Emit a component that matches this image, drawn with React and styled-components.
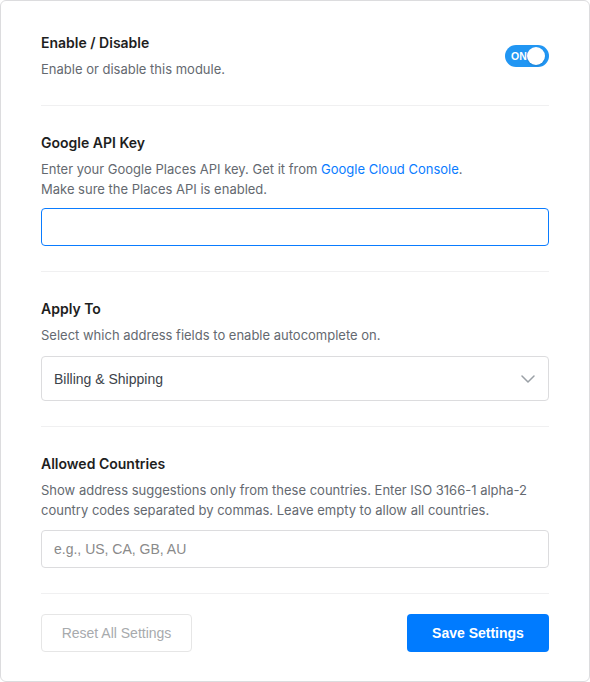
import React from "react";
import styled, { createGlobalStyle } from "styled-components";

const App = () => (
  <>
    <GlobalStyle />
    <Card>
      <Section>
        <Row>
          <div>
            <Title>Enable / Disable</Title>
            <Desc>Enable or disable this module.</Desc>
          </div>
          <Toggle type="button" aria-pressed="true">
            <ToggleLabel>ON</ToggleLabel>
            <Knob />
          </Toggle>
        </Row>
      </Section>

      <Section>
        <Title>Google API Key</Title>
        <Desc>
          Enter your Google Places API key. Get it from{" "}
          <Link href="#">Google Cloud Console</Link>.
          <br />
          Make sure the Places API is enabled.
        </Desc>
        <TextInput type="text" $focused $space={9} />
      </Section>

      <Section>
        <Title>Apply To</Title>
        <Desc>Select which address fields to enable autocomplete on.</Desc>
        <SelectBox>
          <span>Billing &amp; Shipping</span>
          <Chevron width="14" height="8" viewBox="0 0 14 8">
            <polyline points="1,1 7,7 13,1" />
          </Chevron>
        </SelectBox>
      </Section>

      <Section>
        <Title>Allowed Countries</Title>
        <Desc>
          Show address suggestions only from these countries. Enter ISO 3166-1
          alpha-2 country codes separated by commas. Leave empty to allow all
          countries.
        </Desc>
        <TextInput type="text" placeholder="e.g., US, CA, GB, AU" />
      </Section>

      <Footer>
        <GhostButton type="button">Reset All Settings</GhostButton>
        <PrimaryButton type="button">Save Settings</PrimaryButton>
      </Footer>
    </Card>
  </>
);

const GlobalStyle = createGlobalStyle`
  * { box-sizing: border-box; }
  html, body {
    margin: 0;
    background: #ffffff;
  }
  body {
    font-family: Inter, "Noto Sans", sans-serif;
  }
`;

const Card = styled.div`
  width: 590px;
  height: 682px;
  background: #fff;
  border: 1px solid #dcdcde;
  border-radius: 6px;
  padding: 5px 40px 29px;
`;

const Section = styled.section`
  padding: 27px 0 25px;
  border-bottom: 1px solid #f0f0f1;

  &:first-child {
    padding-bottom: 26px;
  }
`;

const Row = styled.div`
  display: flex;
  justify-content: space-between;
  align-items: center;
`;

const Title = styled.h3`
  margin: 0 0 6px;
  font-size: 14px;
  line-height: 20px;
  font-weight: 600;
  color: #1e1e1e;
`;

const Desc = styled.p`
  margin: 0;
  max-width: 490px;
  font-size: 13px;
  line-height: 20px;
  color: #646970;
`;

const Link = styled.a`
  color: #0a7cff;
  text-decoration: none;
`;

const Toggle = styled.button`
  position: relative;
  display: flex;
  align-items: center;
  width: 44px;
  height: 22px;
  margin: 0;
  padding: 0 0 0 6px;
  border: none;
  border-radius: 11px;
  background: #2196f3;
  cursor: pointer;
`;

const ToggleLabel = styled.span`
  font-family: "Liberation Sans", Arial, sans-serif;
  font-size: 10.5px;
  font-weight: 700;
  color: #fff;
`;

const Knob = styled.span`
  position: absolute;
  top: 2px;
  right: 4px;
  width: 18px;
  height: 18px;
  border-radius: 50%;
  background: #fff;
  box-shadow: 0 1px 2px rgba(0, 0, 0, 0.15);
`;

const TextInput = styled.input`
  display: block;
  width: 100%;
  height: 38px;
  margin-top: ${(p) => p.$space ?? 10}px;
  padding: 0 12px;
  border: 1px solid ${(p) => (p.$focused ? "#0a7cff" : "#dcdcde")};
  border-radius: 4px;
  font-family: "Liberation Sans", Arial, sans-serif;
  font-size: 14px;
  color: #333;
  background: #fff;
  outline: none;

  &::placeholder {
    color: #8a8a8a;
  }
`;

const SelectBox = styled.div`
  display: flex;
  align-items: center;
  justify-content: space-between;
  height: 45px;
  margin-top: 11px;
  padding: 0 13px 0 12px;
  border: 1px solid #dcdcde;
  border-radius: 4px;
  font-family: "Liberation Sans", Arial, sans-serif;
  font-size: 14px;
  color: #3c434a;
`;

const Chevron = styled.svg`
  fill: none;
  stroke: #9aa0a6;
  stroke-width: 1.5;
  stroke-linecap: round;
  stroke-linejoin: round;
`;

const Footer = styled.div`
  display: flex;
  justify-content: space-between;
  align-items: center;
  padding-top: 20px;
`;

const Button = styled.button`
  height: 38px;
  border-radius: 4px;
  font-family: "Liberation Sans", Arial, sans-serif;
  font-size: 14px;
  cursor: pointer;
`;

const GhostButton = styled(Button)`
  width: 151px;
  border: 1px solid #e6e6e6;
  background: #fff;
  color: #a7aaad;
`;

const PrimaryButton = styled(Button)`
  width: 142px;
  border: none;
  background: #007bff;
  color: #fff;
  font-weight: 700;
`;

export default App;
